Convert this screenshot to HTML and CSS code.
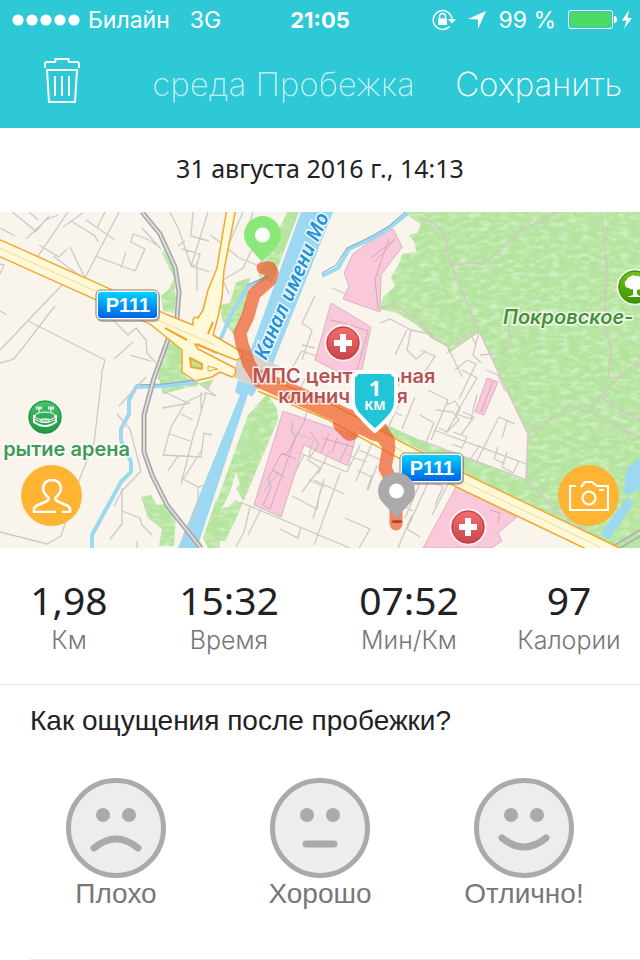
FILE: index.html
```html
<!DOCTYPE html>
<html lang="ru">
<head>
    <meta charset="UTF-8">
    <meta name="viewport" content="width=device-width, initial-scale=1.0">
    <title>среда Пробежка</title>
    <link rel="stylesheet" href="styles.css">
</head>
<body>
    <header class="header">
        <div class="status">
            <div class="status-left">
                <svg width="68" height="12" viewBox="0 0 68 12" fill="#fff">
                    <circle cx="6" cy="6" r="5.6"/><circle cx="20" cy="6" r="5.6"/><circle cx="34" cy="6" r="5.6"/><circle cx="48" cy="6" r="5.6"/><circle cx="62" cy="6" r="5.6"/>
                </svg>
                <span>Билайн</span>
                <span class="network">3G</span>
            </div>
            <strong class="clock">21:05</strong>
            <div class="status-right">
                <svg width="24" height="22" viewBox="0 0 24 22" fill="none" stroke="#fff" stroke-width="1.5">
                    <path d="M20 10A9.4 9.4 0 1 0 17.5 17.5"/>
                    <path d="M16 10h8l-4 4.5z" fill="#fff" stroke="none"/>
                    <path d="M7.5 10V7.5a3 3 0 0 1 6 0V10"/>
                    <rect x="6" y="9.500" width="9" height="6.500" rx="1" fill="#fff" stroke="none"/>
                </svg>
                <svg width="18" height="18" viewBox="0 0 18 18" fill="#fff"><path d="M18 0L10 18V8.500L0 8z"/></svg>
                <span class="percent">99 %</span>
                <svg class="battery" width="64" height="20" viewBox="0 0 64 20">
                    <rect x=".5" y=".5" width="44" height="18" rx="2.500" fill="none" stroke="#fff"/>
                    <rect x="2" y="2" width="41" height="15" rx="1" fill="#4cd964"/>
                    <path d="M46 6q3 0 3 3.500t-3 3.500z" fill="#fff"/>
                    <path d="M61 0l-7 10.500h4.500L56 19l8-11h-4.500z" fill="#fff"/>
                </svg>
            </div>
        </div>
        <nav class="nav">
            <button class="trash" aria-label="Удалить">
                <svg width="36" height="46" viewBox="0 0 36 46" fill="none" stroke="#fff" stroke-width="2">
                    <path d="M1 10V6q0-2 2-2h7q1.500 0 1.500-1.500V1h13v1.500Q24.500 4 26 4h7q2 0 2 2v4"/>
                    <path d="M3 12h30l-2 32H5z"/>
                    <path d="M11 18v20M18 18v20M25 18v20"/>
                </svg>
            </button>
            <h1 class="title">среда Пробежка</h1>
            <button class="save">Сохранить</button>
        </nav>
    </header>

    <time class="date" datetime="2016-08-31T14:13">31 августа 2016 г., 14:13</time>

    <section class="map">
        <svg class="map-canvas" viewBox="0 212 640 336">
            <defs>
                <filter id="grass" x="0" y="0" width="100%" height="100%" color-interpolation-filters="sRGB">
                    <feTurbulence type="fractalNoise" baseFrequency=".1 .22" numOctaves="3" seed="4"/>
                    <feColorMatrix values="0 0 0 0 .82  0 0 0 0 .94  0 0 0 0 .76  2.500 0 0 0 -1.050"/>
                    <feComposite in2="SourceAlpha" operator="in" result="flecks"/>
                    <feMerge><feMergeNode in="SourceGraphic"/><feMergeNode in="flecks"/></feMerge>
                </filter>
                <linearGradient id="shield" x2="0" y2="1"><stop offset="0" stop-color="#00d2ff"/><stop offset="1" stop-color="#0062e6"/></linearGradient>
                <linearGradient id="red" x2="0" y2="1"><stop offset="0" stop-color="#f4706f"/><stop offset="1" stop-color="#c74449"/></linearGradient>
                <linearGradient id="park" x2="0" y2="1"><stop offset="0" stop-color="#72c41b"/><stop offset="1" stop-color="#3e9100"/></linearGradient>
                <linearGradient id="stadium" x2="0" y2="1"><stop offset="0" stop-color="#45c46b"/><stop offset="1" stop-color="#239447"/></linearGradient>
            </defs>
            <rect y="212" width="640" height="336" fill="#f9f5ed"/>

            <!-- parks -->
            <g fill="#b5e49f" filter="url(#grass)">
                <path d="M408 212L410 217 421 224 417 233 409 235 415 243 416 252 402 254 399 264 391 277 395 286 383 297 380 309 397 313 417 325 430 337 447 347 449 353 479 332 502 380 528 433 527 480 420 440 387 425 380 430 430 455 465 475 613 548H640V212z"/>
                <path d="M287 212h12L272 283 258 276z"/>
                <path d="M236 282l14-4-6 34-10 23-12-15-2-15 10-2z"/>
                <path d="M165 248l8 17 3 35-2 13-11-2-2-15 9-8 4-10-12-25z"/>
                <path d="M168 340l15 10 3 28 12 8-8 1-22-4-11-4z"/>
                <path d="M158 375l26 2 16 6 14-4-6 11-8-6-37 10z"/>
                <path d="M267 394L277 408 278 420 235 521 225 541 210 541 210 520 248 415z"/>
                <path d="M141 497l10-2 6 10 9-1 10 9-2 33h-15l3-17-14-11z"/>
                <path d="M216 500l4 2v46h-12l-5-10zM193 548l5-9 6 9z"/>
            </g>
            <path d="M236 472l4 12-4 4 9 16-10-4-6 7-7 1 8-16z" fill="#f9f5ed"/>

            <!-- hospital grounds -->
            <g fill="#f9c8db" stroke="#d9b5be" stroke-width="1">
                <path d="M393 229L402 247 381 275 380 312 343 299 349 286 344 273 353 254 373 239z"/>
                <path d="M331 303L371 327 359 383 315 360z"/>
                <path d="M283 411L356 436 348 466 304 445 281 517 254 505z"/>
                <path d="M487 378l11 4-14 33-9-3z"/>
                <path d="M456 487l61 30-19 16 4 8-11 7h-68z"/>
            </g>

            <!-- water -->
            <g fill="#9dd8f3">
                <path d="M301 212H333L272 366 250 352z"/>
                <path d="M238 380l20 7-6 10-4-3L197 548h-19L240 395l-5-3z"/>
                <path d="M640 459q-15 6-15 20t-3 11l6 5 12-6zM627 498l7 4-25 38-9-5z"/>
            </g>
            <g fill="none" stroke="#9dd8f3" stroke-width="4">
                <path d="M408 213L389 228 373 238 349 249 338 268 322 276"/>
                <path d="M269 276L248 287 231 315 218 345"/>
                <path d="M196 382L164 386 136 387 129 400 129 414 121 429 121 440 131 462 131 472 121 482 104 513 92 535 92 548"/>
            </g>
            <g fill="none" stroke="#7fa9b8" stroke-width="1">
                <path d="M322 273L336 265 347 248 372 236 389 226 405 212"/>
                <path d="M268 276L247 285"/>
                <path d="M195 380L164 384 136 385"/>
            </g>

            <!-- streets -->
            <g fill="none" stroke="#cdcac6" stroke-width="1.300">
                <path d="M12 212L36 231 49 216M29 212l9 8M26 239l20-19 12-5M0 228l15 8M68 212L36 259 46 267 56 280M39 245l20 12 8-8M70 247L85 278 119 212M63 227L83 213M86 220l29 20M71 221l24 15 3 6M95 256l40 15 10-22-14-7 2-8 14 5 13 8M121 268l5-16M142 228l19 21M53 256l30 22M0 264l4 1-4 9M62 285L0 350M55 306L14 359 0 363M28 321l77 39-4 15M113 320l15 15 8-7 10 12 1 13 9 10M105 212l-8 16M133 342l-19 17M130 355l21 6M0 311l7 4"/>
                <path d="M170 212l9 18 12 36 6-1 3-11-18-5M193 212l-2 24 18 5M208 212l-17 54 19 6M197 261v30M185 241l-7 5M230 250l-12 4M243 212l-16 36 12 10 23 9M253 212l-7 22 9 9-12 25-20 12 6 14M210 235l14 10"/>
                <path d="M102 375l-8 68-14 35-19 58-14 8-47-12M117 414l13 15 11 42-19 20-8 15M146 377l-27 29M122 488v36l-12 15M122 511l18 7 2 7 10 10M137 541v7M162 391l24 11 20-9 10 3-16-12M190 403l-28 5M186 402l-15 25-8 29M206 394l-10 35M201 392v17M195 429l-14 55M181 414l12 6M170 434l20 7M163 455l38 2 3-24 8 2M178 456l-10 15M201 451l-17 27M181 478l17 9 10-2M198 487v16l-14 32"/>
                <path d="M240 502l110 46M250 507l-6 25-8 15M262 507l-14 28M293 431l20 9-5 20 12 8-18 24M279 472l-15 19M360 445l-13 27-50-20M330 450l-12 24M324 479l-11 40M292 496l25 13 3-18M340 473l-26 72M314 480l30 14M280 529l18 9 3-11M325 487l-16-7M304 455l-10 20M344 432l14 6M367 462l-22-8M372 443l-16 38M359 450l24 11M357 470l15 7M372 475l-5 15M345 518l25 11-11 19M377 465l-9 25M392 500l21 11M412 515l-14 33M420 483l-15 35M431 476l-24 53 13 8M435 483l8 4-8 18M450 480l-18 35"/>
                <path d="M332 288l14 6M315 296l-13 27 10 7-10 30M302 345l13 3M292 368l10-17 14 5M305 379l-10 20M380 323l10-4 21 11-4 20 9 9 10-8M411 330l24 5M407 330l-12 25M420 350l15 6-14 22M392 395l13-20 10 3M380 404l22 12M405 390l-16 36M415 397l-13 32M428 390l20 10-17 40M455 370l12-10 9 4-17 35M462 370l15 8-21 36 15 5 6-24M479 332l-6 23 8 8M430 337l17 8 15 32M455 345l14-14 7 14M486 370l12 5 7 16M499 417l-24 48M499 417l16 7M507 421l-5 17M420 415l14 8-8 19M436 410l17 2 6 8-12 12-8-4M447 405l8-4 5 8-14 24M434 430l95 35M453 432l14 5-5 11-10-4M463 412l11 5-13 18M480 445l-13 19M498 447l-4 12 11 5M507 452l-5 15 11 6 6-12M527 460v18M420 440l107 40"/>
            </g>
            <g fill="none" stroke="#d0a9b5" stroke-width="1">
                <path d="M293 422l-2 9 5 6-10 18-5-1-13 25 3 8-8 18 7 4 25-70 9-17 5-17 48 16M311 432l8 13-9 12M329 434l-8 19M337 438l-5 15M348 443l-8 18M354 447l-33-9M272 470l13 7M282 453l14 6M375 262l20-23-24 19M378 309l-3-30 14-40M330 320l17 4-13 36M350 325l18 6-12 42M493 381l-12 31M490 510l10 3-2 10"/>
            </g>
            <g fill="none" stroke="#d1c8c3" stroke-width="1.500">
                <path d="M420 218L434 223 444 233 451 265 479 331 501 378 528 434 526 480 558 512 585 530M451 265L487 262 522 230 557 212M601 212L607 270 604 325 611 347 608 380M620 378L640 359M479 331L447 353M502 353l9-14-3-11M480 355l22-2M380 309l12-6 24 15 18 20M528 434L569 407 588 411 640 438M588 411L620 375M602 398L640 421"/>
            </g>

            <!-- railway -->
            <g fill="none" stroke-linejoin="round">
                <path d="M142 212L160 234 175 267 179 292 177 318 167 342 154 378 144 415 144 452 152 475 167 505 201 548" stroke="#a5a5a7" stroke-width="5"/>
                <path d="M142 212L160 234 175 267 179 292 177 318 167 342 154 378 144 415 144 452 152 475 167 505 201 548" stroke="#dedddb" stroke-width="2"/>
                <path d="M610 548L640 530M620 548l20-12" stroke="#b1b1b1" stroke-width="2"/>
            </g>

            <!-- bridge over the canal -->
            <path d="M240 347L283 368 262 390 233 377z" fill="#d8d4cc"/>

            <!-- highways: orange casing, then fill -->
            <g fill="none" stroke-linejoin="round">
                <g stroke="#f0a92b">
                    <path d="M-5 246L100 293 160 320" stroke-width="17"/>
                    <path d="M261 384L330 412 400 450 460 480 600 547 650 572" stroke-width="17"/>
                </g>
                <path d="M227 208L220 250 217 268 208 290 203 310 198 318Q192 315 193 325L158 311 150 324 182 350 182 372 195 381 212 377 220 372 232 377Q237 374 235 368L198 349 195 344 236 360Q243 358 242 352L213 335 218 317 222 297 224 270 236 208z" fill="#fff9d8" stroke="#f0a92b" stroke-width="1.500"/>
                <g stroke="#fff9d8">
                    <path d="M-5 246L100 293 164 322" stroke-width="14"/>
                    <path d="M261 384L330 412 400 450 460 480 600 547 650 572" stroke-width="14"/>
                </g>
                <path d="M-5 246L100 293 150 317 215 345M330 412L400 450 460 480 600 547" stroke="#f6d9a0" stroke-width="1"/>
                <path d="M208 334L213 322M165 328l22 12M197 344l20 9" stroke="#f0a92b" stroke-width="2"/>
                <path d="M190 358L202 364V369L191 367z" fill="#b5e49f" stroke="#f0a92b" stroke-width="2"/>
                <path d="M208 366l10 3-10 2z" fill="#f9f5ed" stroke="#f0a92b"/>
            </g>

            <!-- run track -->
            <g fill="none" stroke="#ee5a2a" stroke-linejoin="round" stroke-linecap="round" opacity=".7">
                <path d="M263 268L270 268 272 273 270 280 254 294 248 316 240 333 242 344 249 364 257 377 300 394 338 415 346 431 352 432 340 417 385 438 389 447 385 468 396 490V524" stroke-width="13"/>
                <path d="M260 379L335 412 375 432" stroke-width="18"/>
                <path d="M337 414l40 11 10 16" stroke-width="16"/>
                <path d="M342 424l8 8" stroke-width="18"/>
            </g>

            <!-- map labels -->
            <g class="label">
                <path id="canal" d="M266 361L336 201" fill="none"/>
                <text class="label-water"><textPath href="#canal">Канал имени Мо</textPath></text>
                <text class="label-hospital" x="344" y="383">МПС центральная</text>
                <text class="label-hospital" x="343" y="403">клиническая</text>
                <text class="label-park" x="503" y="324">Покровское-</text>
                <text class="label-arena" x="130" y="456">рытие арена</text>
            </g>

            <!-- places -->
            <g stroke="#fff" stroke-opacity=".8" stroke-width="2">
                <circle cx="343" cy="343" r="17.500" fill="url(#red)"/>
                <circle cx="468" cy="527" r="17.500" fill="url(#red)"/>
                <circle cx="635" cy="287" r="17.500" fill="url(#park)"/>
                <circle cx="45" cy="417" r="17.500" fill="url(#stadium)"/>
            </g>
            <g fill="none">
                <circle cx="343" cy="343" r="16" stroke="#b93b41"/>
                <circle cx="468" cy="527" r="16" stroke="#b93b41"/>
                <circle cx="635" cy="287" r="16" stroke="#3c8a05"/>
                <circle cx="45" cy="417" r="16" stroke="#218a40"/>
            </g>
            <path d="M340 334h6v6h6v6h-6v6h-6v-6h-6v-6h6zM465 518h6v6h6v6h-6v6h-6v-6h-6v-6h6z" fill="#fff"/>
            <path d="M633 295v-6q-3 1-4-1-4 0-4-4-1-3 2-4 0-3 3-3 2-3 6-1 4-1 5 3v10l-4 1v4l4 3h-14z" fill="#fff"/>
            <g fill="none" stroke="#fff">
                <ellipse cx="45" cy="416" rx="10" ry="4"/>
                <path d="M34 415v7q11 8 22 0v-7" stroke-width="2"/>
                <path d="M34 419q11 7 22 0M41 419h8v3h-8zM39 412v-4M51 412v-4"/>
                <path d="M36 408h6M48 408h6" stroke-width="3" stroke-dasharray="1.500 .7"/>
            </g>

            <!-- road shields -->
            <g class="shield">
                <rect x="97" y="292" width="63" height="30" rx="5" fill="#777" opacity=".5"/>
                <rect x="96" y="290" width="63" height="30" rx="5" fill="#fff" stroke="#8b8178"/>
                <rect x="98" y="292" width="59" height="26" rx="3" fill="url(#shield)"/>
                <text x="128" y="312">P111</text>
                <rect x="401" y="455" width="63" height="30" rx="5" fill="#777" opacity=".5"/>
                <rect x="400" y="453" width="63" height="30" rx="5" fill="#fff" stroke="#8b8178"/>
                <rect x="402" y="455" width="59" height="26" rx="3" fill="url(#shield)"/>
                <text x="432" y="475">P111</text>
            </g>

            <!-- start, finish and kilometre markers -->
            <path d="M262 262L249 247Q244 241 244 234.500a18.500 18.500 0 0 1 37 0Q281 241 276 247z" fill="#89e877"/>
            <circle cx="262.500" cy="235" r="7.500" fill="#fff"/>
            <ellipse cx="397" cy="521.500" rx="5.500" ry="1.500" fill="#a4482c"/>
            <path d="M397 518L383 503Q378 498 378 491a18.500 18.500 0 0 1 37 0Q415 498 410 503z" fill="#aaa"/>
            <circle cx="396.500" cy="491" r="7.500" fill="#fff"/>
            <path d="M353 376q3-1 4-4h35q1 3 4 4v25q0 9-6 15-6 7-15 15-9-8-15-15-7-6-7-15z" fill="#20c6d8" stroke="#fff" stroke-width="4" stroke-linejoin="round"/>
            <g class="km">
                <text class="km-number" x="375" y="396">1</text>
                <text class="km-unit" x="375" y="410">КМ</text>
            </g>
        </svg>
        <button class="map-button map-button-left" aria-label="Друзья">
            <svg width="40" height="34" viewBox="0 0 40 34" fill="none" stroke="#fff" stroke-width="2.500" stroke-linecap="round" stroke-linejoin="round">
                <path d="M23 33H2q-1-5 4-7l7-3q5-2 3-5-5-4-5-9 1-8 9-8t9 8q0 5-5 9-2 3 3 5l7 3q5 2 4 7h-7"/>
            </svg>
        </button>
        <button class="map-button map-button-right" aria-label="Добавить фото">
            <svg width="40" height="30" viewBox="0 0 40 30" fill="none" stroke="#fff" stroke-width="2.200">
                <path d="M7 5H1v24h38V5H28l-5-4h-7l-4 5"/>
                <circle cx="20" cy="17" r="6.500"/>
                <path d="M30 9h5"/>
            </svg>
        </button>
    </section>

    <dl class="stats">
        <div class="stat"><dt>Км</dt><dd>1,98</dd></div>
        <div class="stat"><dt>Время</dt><dd>15:32</dd></div>
        <div class="stat"><dt>Мин/Км</dt><dd>07:52</dd></div>
        <div class="stat"><dt>Калории</dt><dd>97</dd></div>
    </dl>

    <section class="feeling">
        <h2>Как ощущения после пробежки?</h2>
        <div class="faces">
            <button class="face">
                <svg width="100" height="100" viewBox="0 0 100 100">
                    <circle cx="50" cy="50" r="47.500"/>
                    <path class="eyes" d="M37 37h0M63 37h0"/>
                    <path d="M28 70q22-18 44 0"/>
                </svg>
                <span>Плохо</span>
            </button>
            <button class="face">
                <svg width="100" height="100" viewBox="0 0 100 100">
                    <circle cx="50" cy="50" r="47.500"/>
                    <path class="eyes" d="M37 37h0M63 37h0"/>
                    <path d="M36 66h28"/>
                </svg>
                <span>Хорошо</span>
            </button>
            <button class="face">
                <svg width="100" height="100" viewBox="0 0 100 100">
                    <circle cx="50" cy="50" r="47.500"/>
                    <path class="eyes" d="M37 37h0M63 37h0"/>
                    <path d="M28 60q22 18 44 0"/>
                </svg>
                <span>Отлично!</span>
            </button>
        </div>
        <hr class="divider">
    </section>
</body>
</html>
```

FILE: styles.css
```css
body {
    margin: 0;
    background-color: #fff;
    color: #222;
    font-family: "Liberation Sans", Arial, sans-serif;
}
button {
    padding: 0;
    border: none;
    background: none;
    color: inherit;
    font: inherit;
    cursor: pointer;
}
svg {
    display: block;
}

.header {
    background-color: #2ec9d7;
    color: #fff;
}
.status {
    display: grid;
    grid-template-columns: 1fr auto 1fr;
    align-items: center;
    height: 40px;
    padding: 0 12px;
    font-family: Inter, sans-serif;
    font-size: 23px;
}
.clock {
    font-size: 22px;
}
.status-left, .status-right {
    display: flex;
    align-items: center;
    gap: 8px;
}
.status-right {
    justify-content: flex-end;
    gap: 12px;
}
.network {
    margin-left: 12px;
}
.battery {
    margin-right: -4px;
}
.nav {
    display: flex;
    align-items: center;
    height: 88px;
    padding: 0 18px 0 44px;
    font-family: Inter, sans-serif;
    font-size: 33px;
    font-weight: 200;
}
.trash {
    margin-bottom: 6px;
}
.title {
    margin: 0 40px 0 auto;
    font-size: 33px;
    font-weight: 200;
    opacity: 0.7;
}

.date {
    display: block;
    padding-bottom: 4px;
    font-family: "Noto Sans", sans-serif;
    font-size: 25px;
    line-height: 80px;
    text-align: center;
}

.map {
    position: relative;
}
.map-canvas {
    width: 100%;
    height: auto;
}
.map-button {
    position: absolute;
    bottom: 22px;
    display: flex;
    align-items: center;
    justify-content: center;
    width: 61px;
    height: 61px;
    border-radius: 50%;
    background-color: #ffb433;
}
.map-button-left {
    left: 21px;
}
.map-button-right {
    right: 21px;
}
.label {
    font-family: Inter, sans-serif;
    font-size: 20px;
    font-weight: 600;
    paint-order: stroke;
    stroke: rgba(255, 255, 255, 0.8);
    stroke-width: 3px;
}
.label #canal {
    stroke: none;
}
.label-water {
    fill: #2391d6;
    font-family: "Noto Sans", sans-serif;
    font-style: italic;
}
.label-hospital {
    fill: #b65354;
    text-anchor: middle;
}
.label-park {
    fill: #47903a;
    font-style: italic;
}
.label-arena {
    fill: #3f9b56;
    text-anchor: end;
}
.shield {
    fill: #fff;
    font-size: 20px;
    font-weight: bold;
    text-anchor: middle;
}
.km {
    fill: #fff;
    font-family: "Noto Sans", sans-serif;
    font-weight: bold;
    text-anchor: middle;
}
.km-number {
    font-size: 22px;
}
.km-unit {
    font-size: 13px;
}

.stats {
    display: grid;
    grid-template-columns: 138fr 182fr 178fr 142fr;
    margin: 0;
    padding: 28px 0;
    border-bottom: 1px solid #e8e8e8;
    text-align: center;
}
.stat {
    display: flex;
    flex-direction: column-reverse;
}
.stat dt {
    color: #777;
    font-family: Inter, sans-serif;
    font-size: 25px;
    font-weight: 300;
    line-height: 32px;
}
.stat dd {
    margin: 0;
    font-family: "Noto Sans", sans-serif;
    font-size: 39px;
    line-height: 48px;
}

.feeling {
    padding-top: 20px;
}
.feeling h2 {
    margin: 0 30px;
    font-size: 28px;
    font-weight: normal;
    line-height: 32px;
}
.faces {
    display: grid;
    grid-template-columns: repeat(3, 1fr);
    padding: 41px 14px 49px;
}
.face {
    display: flex;
    flex-direction: column;
    align-items: center;
    color: #777;
    font-size: 28px;
    line-height: 32px;
}
.face svg {
    fill: #ededed;
    stroke: #aaa;
    stroke-width: 5;
    stroke-linecap: round;
}
.face path {
    fill: none;
    stroke-width: 7;
}
.face .eyes {
    stroke-width: 14;
}
.divider {
    margin: 0 0 0 30px;
    border: none;
    border-top: 1px solid #e8e8e8;
}
```
